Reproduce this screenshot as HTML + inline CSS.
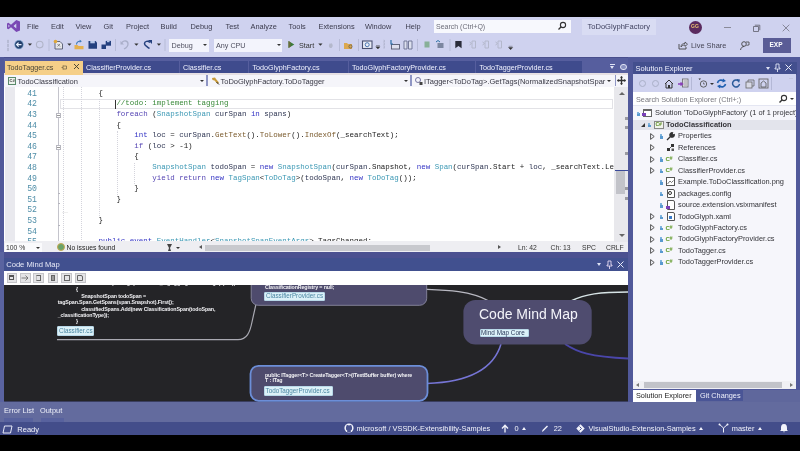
<!DOCTYPE html>
<html><head><meta charset="utf-8">
<style>
*{margin:0;padding:0;box-sizing:border-box}
html,body{width:800px;height:451px;overflow:hidden;background:#000}
body{position:relative;filter:blur(0.4px);font-family:"Liberation Sans",sans-serif;font-size:8px;color:#1e1e1e}
.a{position:absolute}
.t{position:absolute;white-space:nowrap;line-height:1}
.menu{font-size:7.4px;color:#3a3a4c;margin-top:0.4px}
.tri{width:0;height:0;border-left:2.5px solid transparent;border-right:2.5px solid transparent;border-top:2.5px solid #333}
.sep{top:39px;width:1px;height:12px;background:#b4b8d6}
.tab{top:61px;height:11.5px;background:#3f4b8d}
.tabt{top:63.8px;font-size:7.2px;color:#f0f2ff}
.navt{top:78px;font-size:7.5px;color:#383844}
.code{left:58.6px;font-family:"Liberation Mono",monospace;font-size:7.483px;line-height:10.6px;color:#222;white-space:pre}
.ln{left:8px;width:25px;text-align:right;font-family:"Liberation Mono",monospace;font-size:8.2px;line-height:10.6px;color:#4f8ea8}
.k{color:#3333c4}.c{color:#5646b4}.ty{color:#3b98b4}.lv{color:#2e3552}.m{color:#7a5a2c}.cm{color:#3a8a3a}
.stt{top:425.3px;font-size:7.4px;color:#f2f3fb}
.tbt{top:41.5px;font-size:7.2px;color:#505060}
.mmt{font-size:5.3px;color:#f2f2f5;font-weight:bold;letter-spacing:-0.12px}
.chip{background:#dcf1f8;border:0.8px solid #b8d8e8;border-radius:1px}
.chipt{font-size:6.3px;color:#4a86a2}
</style></head><body>
<!-- top black -->
<div class="a" style="left:0;top:0;width:800px;height:17px;background:#000"></div>
<!-- title + toolbar lavender -->
<div class="a" id="chrome" style="left:0;top:17px;width:800px;height:40px;background:#cfd2ef"></div>

<!-- CHROME CONTENT -->
<svg class="a" style="left:7px;top:20px" width="13" height="12" viewBox="0 0 13 12"><path d="M9.3 0 L13 1.5 V10.5 L9.3 12 L4 7.3 L1.4 9.2 L0 8.5 V3.5 L1.4 2.8 L4 4.7 Z M9.3 3.4 L6.5 6 L9.3 8.6 Z M1.4 4.6 V7.4 L2.8 6 Z" fill="#7a48b4" fill-rule="evenodd"/></svg>
<div class="t menu" style="left:27px;top:23px">File</div>
<div class="t menu" style="left:51px;top:23px">Edit</div>
<div class="t menu" style="left:75.5px;top:23px">View</div>
<div class="t menu" style="left:103.5px;top:23px">Git</div>
<div class="t menu" style="left:126px;top:23px">Project</div>
<div class="t menu" style="left:160.5px;top:23px">Build</div>
<div class="t menu" style="left:190.5px;top:23px">Debug</div>
<div class="t menu" style="left:225.5px;top:23px">Test</div>
<div class="t menu" style="left:250.5px;top:23px">Analyze</div>
<div class="t menu" style="left:288.5px;top:23px">Tools</div>
<div class="t menu" style="left:318.5px;top:23px">Extensions</div>
<div class="t menu" style="left:365px;top:23px">Window</div>
<div class="t menu" style="left:405.5px;top:23px">Help</div>
<!-- search box -->
<div class="a" style="left:434px;top:20px;width:137px;height:13px;background:#f7f8fd"></div>
<div class="t" style="left:436px;top:23px;font-size:7px;color:#6d6d7a">Search (Ctrl+Q)</div>
<svg class="a" style="left:557px;top:21px" width="10" height="10" viewBox="0 0 10 10"><circle cx="6" cy="4" r="2.6" fill="none" stroke="#333" stroke-width="1.1"/><path d="M4.2 5.8 L1.5 8.5" stroke="#333" stroke-width="1.3"/></svg>
<div class="a" style="left:582px;top:19px;width:74px;height:16px;background:#d9dcf3"></div>
<div class="t" style="left:587.5px;top:23px;font-size:7.55px;color:#404260">ToDoGlyphFactory</div>
<!-- avatar -->
<div class="a" style="left:689px;top:20.5px;width:13px;height:13px;border-radius:50%;background:#5a2a5e"></div>
<div class="t" style="left:691px;top:24px;font-size:5px;color:#e8c070;font-weight:bold">GG</div>
<!-- window controls -->
<div class="a" style="left:724px;top:27px;width:7px;height:1px;background:#8a8a98"></div>
<svg class="a" style="left:752px;top:23.5px" width="9" height="9" viewBox="0 0 9 9"><path d="M1.5 2.5 h5 v5 h-5z M2.8 1.2 h5 v5" fill="none" stroke="#6a6a78" stroke-width="0.9"/></svg>
<svg class="a" style="left:781.5px;top:24px" width="8" height="8" viewBox="0 0 8 8"><path d="M0.7 0.7 L7.3 7.3 M7.3 0.7 L0.7 7.3" stroke="#757584" stroke-width="0.8"/></svg>
<!-- toolbar -->
<svg class="a" style="left:0;top:17px" width="560" height="40" viewBox="0 17 560 40">
<path d="M7 40 l2 1.5 l-2 1.5 M9 40 l-2 1.5 l2 1.5 M7 44 l2 1.5 l-2 1.5 M9 44 l-2 1.5 l2 1.5 M7 48 l2 1.5 l-2 1.5 M9 48 l-2 1.5 l2 1.5" stroke="#a8acc4" stroke-width="0.6" fill="none"/>
<circle cx="19" cy="44.6" r="4.3" fill="#25406e" stroke="#7fb0d8" stroke-width="0.6"/>
<path d="M21.5 44.6 H16.8 M18.6 42.6 L16.6 44.6 L18.6 46.6" stroke="#e8f2ff" stroke-width="1.2" fill="none"/>
<path d="M27.8 43.6 h4.2 l-2.1 2.2z" fill="#333"/>
<circle cx="39.7" cy="44.6" r="3.3" fill="none" stroke="#b0b4c8" stroke-width="1.1"/>
<rect x="48.5" y="39" width="1" height="12" fill="#b8bcd8"/>
<path d="M55 41.5 h5 l2.5 2.5 v5 h-7.5z" fill="#e6e6ea" stroke="#555a70" stroke-width="0.9"/>
<path d="M57.5 44 l2.5 2.5 M60 44 l-2.5 2.5" stroke="#666" stroke-width="0.7"/>
<circle cx="55.5" cy="41.5" r="1.8" fill="#e0a83a"/>
<path d="M67.3 43.6 h4.2 l-2.1 2.2z" fill="#333"/>
<path d="M74.5 45 h3 l1 1 h5 v3.3 h-9z" fill="#e4b04e"/>
<path d="M76.5 44.5 c0-2.5 2-3.5 4-3.2" fill="none" stroke="#3a78b8" stroke-width="1.1"/>
<path d="M79.7 39.8 l2.2 1.5 l-2.2 1.5z" fill="#3a78b8"/>
<path d="M88.5 41 h7 l1.5 1.5 v6.3 h-8.5z" fill="#24407e"/>
<rect x="90.3" y="41" width="4.5" height="2.3" fill="#b8c8e8"/>
<path d="M101.5 44.5 h4.5 v4.5 h-4.5z" fill="#24407e"/>
<path d="M105.7 40.9 h5.3 v4.8 h-5.3z" fill="#24407e"/>
<rect x="107" y="40.9" width="2.5" height="1.3" fill="#b8c8e8"/>
<rect x="115" y="39" width="1" height="12" fill="#b8bcd8"/>
<path d="M122 42.5 c2-2.5 6-2 6 1.5 c0 2.5 -2 4 -4 5" fill="none" stroke="#a9aec8" stroke-width="1.3"/>
<path d="M120.5 41 v3.5 h3.5z" fill="#a9aec8"/>
<path d="M134.3 43.6 h4.2 l-2.1 2.2z" fill="#333"/>
<path d="M149.5 48.5 c-2-1.5 -5-3 -5-5 c0-2.3 3.5-3 5.5-1" fill="none" stroke="#24407e" stroke-width="1.5"/>
<path d="M148 40 h4 v4 z" fill="#24407e"/>
<path d="M156.8 43.6 h4.2 l-2.1 2.2z" fill="#333"/>
<rect x="164.5" y="39" width="1" height="12" fill="#b8bcd8"/>
<path d="M288.5 41 l5.8 3.5 l-5.8 3.5z" fill="#3a7a3a"/>
<path d="M288.5 41 v7 l2 -1.2 v-4.6z" fill="#6b6b3a"/>
<path d="M318.3 43.6 h4.2 l-2.1 2.2z" fill="#333"/>
<path d="M330 48 c-1.5-1 -1.5-3 0-5 c0.5 1.2 1.5 1 1.5 0 c1.5 1.5 1.8 3.5 0 5z" fill="#b4b8cc"/>
<rect x="339" y="39" width="1" height="12" fill="#b8bcd8"/>
<path d="M344 43 h3 l1 1 h4 v5 h-8z" fill="#dca850"/>
<circle cx="350.5" cy="46.5" r="1.6" fill="none" stroke="#555" stroke-width="0.7"/>
<rect x="358" y="39" width="1" height="12" fill="#b8bcd8"/>
<rect x="362.5" y="41" width="9.5" height="7.5" fill="#e8ebf5" stroke="#4a5070" stroke-width="1.1"/>
<circle cx="367.2" cy="44.7" r="2" fill="none" stroke="#3a6aa8" stroke-width="0.9"/>
<path d="M375.8 46.8 h4.2 l-2.1 2.2z M376 45.5 h3.8" fill="#333" stroke="#333" stroke-width="0.4"/>
<path d="M383.5 40 l1.5 1.2 l-1.5 1.2 M383.5 43 l1.5 1.2 l-1.5 1.2 M383.5 46 l1.5 1.2 l-1.5 1.2 M385 40 l-1.5 1.2 l1.5 1.2 M385 43 l-1.5 1.2 l1.5 1.2 M385 46 l-1.5 1.2 l1.5 1.2" stroke="#a8acc4" stroke-width="0.5" fill="none"/>
<rect x="391.5" y="44.5" width="8" height="4.5" fill="#dde0ee" stroke="#555a70" stroke-width="0.9"/>
<path d="M391 40 v4 h2" fill="none" stroke="#2a70a8" stroke-width="1.2"/>
<path d="M404 41 h3 v8 h-3z M408.5 41 h3.5 v8 h-3.5z" fill="#dde0ee" stroke="#6a7090" stroke-width="0.9"/>
<rect x="417" y="39" width="1" height="12" fill="#b8bcd8"/>
<rect x="424.5" y="41.5" width="5" height="6" fill="#88b098"/>
<path d="M436 42 l2 -1.5 l2 1.5" fill="none" stroke="#2a70a8" stroke-width="1"/>
<rect x="437.5" y="43" width="6" height="5" fill="#7c86a0"/>
<rect x="449.5" y="39" width="1" height="12" fill="#b8bcd8"/>
<path d="M455.3 41 h6.3 v7.2 l-3.15 -2.2 l-3.15 2.2z" fill="#2a2c3a"/>
<path d="M469.5 42 l2 1.5 l-2 1.5 M472 41 h3.5 v7 h-3.5z" fill="none" stroke="#b4b8cc" stroke-width="1"/>
<path d="M482.5 42 l2 1.5 l-2 1.5 M485 41 h3.5 v7 h-3.5z" fill="none" stroke="#b4b8cc" stroke-width="1"/>
<path d="M495.5 42 l2 1.5 l-2 1.5 M498 41 h3.5 v7 h-3.5z" fill="none" stroke="#b4b8cc" stroke-width="1"/>
<path d="M508.5 47.5 h4.2 l-2.1 2.2z M508.7 46.3 h3.8" fill="#333" stroke="#333" stroke-width="0.4"/>
</svg>
<div class="a" style="left:169px;top:38.5px;width:40px;height:13px;background:#f3f4fc"></div>
<div class="t tbt" style="left:171.5px">Debug</div>
<div class="a tri" style="left:203px;top:44px"></div>
<div class="a" style="left:213.5px;top:38.5px;width:68.5px;height:13px;background:#f3f4fc"></div>
<div class="t tbt" style="left:216px">Any CPU</div>
<div class="a tri" style="left:276.5px;top:44px"></div>
<div class="t tbt" style="left:299px;color:#333">Start</div>
<!-- Live share -->
<svg class="a" style="left:678px;top:41px" width="10" height="9" viewBox="0 0 10 9"><path d="M1 3 V8 H8 V6" fill="none" stroke="#444" stroke-width="0.9"/><path d="M3 6 C3 3 5 2.5 7 2.5 V1 L9.5 3.2 L7 5.4 V4 C5.5 4 4 4.3 3 6Z" fill="none" stroke="#444" stroke-width="0.8"/></svg>
<div class="t" style="left:691px;top:42.2px;font-size:7.4px;color:#454555">Live Share</div>
<svg class="a" style="left:739px;top:40px" width="11" height="11" viewBox="0 0 11 11"><circle cx="5" cy="4" r="2.3" fill="none" stroke="#444" stroke-width="0.9"/><path d="M1.5 10 C2 7.5 3.5 6.5 5 6.5" fill="none" stroke="#444" stroke-width="0.9"/><path d="M7 2 H10 V5 H8.5 L7.5 6" fill="none" stroke="#444" stroke-width="0.8"/></svg>
<div class="a" style="left:763px;top:38px;width:28px;height:15px;background:#5a5c96"></div>
<div class="t" style="left:769.5px;top:42px;font-size:6.5px;color:#fff;font-weight:bold">EXP</div>
<!-- main dark blue frame -->
<div class="a" style="left:0;top:57px;width:800px;height:345px;background:#51599a"></div>
<div class="a" style="left:0;top:252px;width:4.5px;height:150px;background:#5a63a0"></div>
<!-- tab well -->
<div class="a" style="left:4px;top:57px;width:624px;height:17px;background:#565e9e"></div>
<!-- nav bar -->
<div class="a" style="left:4px;top:74px;width:624px;height:13px;background:#f5f5fa"></div>

<!-- TABS -->
<div class="a" style="left:4px;top:57px;width:624px;height:1px;background:#484e8c"></div>
<div class="a tab" style="left:83px;width:96px"></div>
<div class="a tab" style="left:180px;width:68px"></div>
<div class="a tab" style="left:249px;width:99px"></div>
<div class="a tab" style="left:349px;width:126px"></div>
<div class="a tab" style="left:476px;width:106px"></div>
<div class="a" style="left:4px;top:72.5px;width:624px;height:2px;background:#e6e0e4"></div>
<div class="a" style="left:4.5px;top:61px;width:78px;height:13.5px;background:#f5cf88"></div>
<div class="t tabt" style="left:7px;color:#4a4636">TodoTagger.cs</div>
<svg class="a" style="left:61px;top:63.5px" width="7" height="7" viewBox="0 0 7 7"><path d="M0.5 3.5 H2 M2 1.5 V5.5 M2 2 H5.5 V5 H2" fill="none" stroke="#7a6a48" stroke-width="0.8"/></svg>
<svg class="a" style="left:72.5px;top:63px" width="7" height="7" viewBox="0 0 7 7"><path d="M1 1 L6 6 M6 1 L1 6" stroke="#3b3a2a" stroke-width="0.9"/></svg>
<div class="t tabt" style="left:86px">ClassifierProvider.cs</div>
<div class="t tabt" style="left:183px">Classifier.cs</div>
<div class="t tabt" style="left:252.5px">TodoGlyphFactory.cs</div>
<div class="t tabt" style="left:352px">TodoGlyphFactoryProvider.cs</div>
<div class="t tabt" style="left:479.5px">TodoTaggerProvider.cs</div>
<div class="a" style="left:609.5px;top:64px;width:5px;height:1px;background:#dfe3f5"></div>
<div class="a" style="left:609.5px;top:66px;width:0;height:0;border-left:2.5px solid transparent;border-right:2.5px solid transparent;border-top:3px solid #dfe3f5"></div>
<div class="a" style="left:620px;top:63.5px;width:6.5px;height:6.5px;border-radius:50%;border:1.6px solid #dfe3f5;background:#8890c0"></div>
<!-- NAV BAR -->
<div class="a" style="left:206px;top:75px;width:1.5px;height:11px;background:#8f96c4"></div>
<div class="a" style="left:410px;top:75px;width:1.5px;height:11px;background:#8f96c4"></div>
<div class="a" style="left:614.5px;top:75px;width:1.5px;height:11px;background:#8f96c4"></div>
<div class="a" style="left:8px;top:76.5px;width:8px;height:8px;border:1px solid #5a8a6a;background:#eef3ee"></div>
<div class="t" style="left:9.5px;top:78.5px;font-size:4px;color:#333;font-weight:bold">C#</div>
<div class="t navt" style="left:17.5px">TodoClassification</div>
<div class="a tri" style="left:199.5px;top:79.5px"></div>
<svg class="a" style="left:211px;top:76px" width="9" height="9" viewBox="0 0 9 9"><path d="M1 2 L4 1.5 L5 3 L8 6.5 L6.5 8 L3.5 4.5 L1.5 4 Z" fill="#c89a3a"/><path d="M5.5 6 L8 8.5" stroke="#333" stroke-width="1"/></svg>
<div class="t navt" style="left:220.5px">ToDoGlyphFactory.ToDoTagger</div>
<div class="a tri" style="left:403.5px;top:79.5px"></div>
<svg class="a" style="left:414px;top:75.5px" width="10" height="10" viewBox="0 0 10 10"><circle cx="4" cy="4" r="2.5" fill="none" stroke="#6a6a9a" stroke-width="0.9"/><rect x="5.5" y="6" width="3" height="3" fill="#444"/></svg>
<div class="t navt" style="left:424px">ITagger&lt;ToDoTag&gt;.GetTags(NormalizedSnapshotSpar</div>
<div class="a tri" style="left:606.5px;top:79.5px"></div>
<svg class="a" style="left:617px;top:76px" width="9" height="9" viewBox="0 0 9 9"><path d="M4.5 0.5 V8.5 M0.5 4.5 H8.5" stroke="#333" stroke-width="1.3"/><path d="M4.5 0 L3 1.8 H6 Z M4.5 9 L3 7.2 H6Z M0 4.5 L1.8 3 V6Z M9 4.5 L7.2 3 V6Z" fill="#333"/></svg>
<!-- code area -->
<div class="a" style="left:4px;top:87px;width:624px;height:155px;background:#fff"></div>
<!-- CODE -->
<div class="a" style="left:4px;top:87px;width:610px;height:155px;overflow:hidden">
<div class="a" style="left:0.5px;top:0;width:10.5px;height:155px;background:#e9e9ee"></div>
<div class="a" style="left:56px;top:11.5px;width:553px;height:10px;border:1px solid #e2e2e6"></div>
<div class="a" style="left:58.6px;top:0.0px;width:0;height:155.0px;border-left:1px dotted #d4d4dc"></div>
<div class="a" style="left:76.6px;top:0.0px;width:0;height:155.0px;border-left:1px dotted #d4d4dc"></div>
<div class="a" style="left:94.5px;top:12.3px;width:0;height:116.6px;border-left:1px dotted #d4d4dc"></div>
<div class="a" style="left:112.5px;top:44.1px;width:0;height:63.6px;border-left:1px dotted #d4d4dc"></div>
<div class="a" style="left:130.4px;top:75.9px;width:0;height:21.2px;border-left:1px dotted #d4d4dc"></div>
<div class="a" style="left:53.5px;top:0;width:1px;height:155px;background:#c4c4cc"></div>
<div class="a" style="left:51.5px;top:25.9px;width:5px;height:5px;border:0.8px solid #b8b8c0;background:#fff"></div>
<div class="a" style="left:52.5px;top:27.9px;width:3px;height:0.8px;background:#999"></div>
<div class="a" style="left:51.5px;top:57.7px;width:5px;height:5px;border:0.8px solid #b8b8c0;background:#fff"></div>
<div class="a" style="left:52.5px;top:59.7px;width:3px;height:0.8px;background:#999"></div>
<div class="a" style="left:54px;top:105.7px;width:2px;height:1px;background:#b5b5bd"></div>
<div class="a" style="left:54px;top:116.3px;width:2px;height:1px;background:#b5b5bd"></div>
<div class="a" style="left:54px;top:137.5px;width:2px;height:1px;background:#b5b5bd"></div>
<div class="t" style="left:58px;top:122.3px;font-size:6px;color:#999">&#183;&#183;&#183;</div>
<div class="t ln" style="top:1.7px">41</div>
<div class="t code" style="top:0.8px">        {</div>
<div class="t ln" style="top:12.3px">42</div>
<div class="t code" style="top:11.4px">            <span class="cm">//todo: implement tagging</span></div>
<div class="t ln" style="top:22.9px">43</div>
<div class="t code" style="top:22.0px">            <span class="c">foreach</span> (<span class="ty">SnapshotSpan</span> <span class="lv">curSpan</span> <span class="k">in</span> <span class="lv">spans</span>)</div>
<div class="t ln" style="top:33.5px">44</div>
<div class="t code" style="top:32.6px">            {</div>
<div class="t ln" style="top:44.1px">45</div>
<div class="t code" style="top:43.2px">                <span class="k">int</span> <span class="lv">loc</span> = <span class="lv">curSpan</span>.<span class="m">GetText</span>().<span class="m">ToLower</span>().<span class="m">IndexOf</span>(_searchText);</div>
<div class="t ln" style="top:54.7px">46</div>
<div class="t code" style="top:53.8px">                <span class="c">if</span> (<span class="lv">loc</span> &gt; -1)</div>
<div class="t ln" style="top:65.3px">47</div>
<div class="t code" style="top:64.4px">                {</div>
<div class="t ln" style="top:75.9px">48</div>
<div class="t code" style="top:75.0px">                    <span class="ty">SnapshotSpan</span> <span class="lv">todoSpan</span> = <span class="k">new</span> <span class="ty">SnapshotSpan</span>(<span class="lv">curSpan</span>.Snapshot, <span class="k">new</span> <span class="ty">Span</span>(<span class="lv">curSpan</span>.Start + <span class="lv">loc</span>, _searchText.Length));</div>
<div class="t ln" style="top:86.5px">49</div>
<div class="t code" style="top:85.6px">                    <span class="c">yield</span> <span class="c">return</span> <span class="k">new</span> <span class="ty">TagSpan</span>&lt;<span class="ty">ToDoTag</span>&gt;(<span class="lv">todoSpan</span>, <span class="k">new</span> <span class="ty">ToDoTag</span>());</div>
<div class="t ln" style="top:97.1px">50</div>
<div class="t code" style="top:96.2px">                }</div>
<div class="t ln" style="top:107.7px">51</div>
<div class="t code" style="top:106.8px">            }</div>
<div class="t ln" style="top:118.3px">52</div>
<div class="t code" style="top:117.4px"></div>
<div class="t ln" style="top:128.9px">53</div>
<div class="t code" style="top:128.0px">        }</div>
<div class="t ln" style="top:139.5px">54</div>
<div class="t code" style="top:138.6px"></div>
<div class="t ln" style="top:150.1px">55</div>
<div class="t code" style="top:149.2px">        <span class="k">public</span> <span class="k">event</span> <span class="ty">EventHandler</span>&lt;<span class="ty">SnapshotSpanEventArgs</span>&gt; TagsChanged;</div>
<div class="a" style="left:110.7px;top:12.5px;width:1.4px;height:9px;background:#333"></div>
</div>
<!-- editor status row -->
<div class="a" style="left:4px;top:241.3px;width:624px;height:10.7px;background:#eeeef2"></div>

<!-- EDITOR STATUS ROW -->
<div class="a" style="left:5px;top:243px;width:37px;height:9px;background:#fafafc"></div>
<div class="t" style="left:6px;top:244.5px;font-size:6.8px;color:#333">100 %</div>
<div class="a tri" style="left:36px;top:246.5px"></div>
<div class="a" style="left:56.5px;top:243px;width:8px;height:8px;border-radius:50%;background:#6aa36a;border:1px solid #c8a850"></div>
<div class="t" style="left:66.5px;top:244.5px;font-size:6.8px;color:#222">No issues found</div>
<svg class="a" style="left:165px;top:243px" width="9" height="9" viewBox="0 0 9 9"><path d="M2 1 L7 1 L5 5 L6 8 L3 8 L4 5 Z" fill="#444"/></svg>
<div class="a tri" style="left:176px;top:246.5px"></div>
<div class="a" style="left:199px;top:245px;width:0;height:0;border-right:3px solid #555;border-top:2.5px solid transparent;border-bottom:2.5px solid transparent"></div>
<div class="a" style="left:205px;top:244.5px;width:225px;height:6px;background:#c8c9ce"></div>
<div class="a" style="left:497.5px;top:245px;width:0;height:0;border-left:3px solid #555;border-top:2.5px solid transparent;border-bottom:2.5px solid transparent"></div>
<div class="t" style="left:518px;top:244.5px;font-size:6.8px;color:#333">Ln: 42</div>
<div class="t" style="left:550.5px;top:244.5px;font-size:6.8px;color:#333">Ch: 13</div>
<div class="t" style="left:582px;top:244.5px;font-size:6.8px;color:#333">SPC</div>
<div class="t" style="left:606px;top:244.5px;font-size:6.8px;color:#333">CRLF</div>
<!-- V SCROLLBAR -->
<div class="a" style="left:614px;top:87px;width:14px;height:155px;background:#e8e8ec"></div>
<div class="a" style="left:618.5px;top:91.5px;width:0;height:0;border-left:3px solid transparent;border-right:3px solid transparent;border-bottom:3px solid #666"></div>
<div class="a" style="left:618.5px;top:233.5px;width:0;height:0;border-left:3px solid transparent;border-right:3px solid transparent;border-top:3px solid #666"></div>
<div class="a" style="left:616px;top:171px;width:8.5px;height:23px;background:#c2c3c9"></div>
<div class="a" style="left:614.5px;top:169.5px;width:13.5px;height:1.2px;background:#3a4a9a"></div>
<div class="a" style="left:625px;top:116.5px;width:3px;height:3px;background:#9a9aa0"></div>
<div class="a" style="left:625px;top:125.5px;width:3px;height:3px;background:#9a9aa0"></div>
<div class="a" style="left:625px;top:151.5px;width:3px;height:3px;background:#9a9aa0"></div>
<div class="a" style="left:625px;top:186.5px;width:3px;height:3px;background:#9a9aa0"></div>
<div class="a" style="left:625px;top:196.5px;width:3px;height:3px;background:#9a9aa0"></div>
<!-- mind map title -->
<div class="a" style="left:4px;top:252px;width:624px;height:5.5px;background:#4b5090"></div>
<div class="a" style="left:4px;top:257.5px;width:624px;height:13px;background:#41508f"></div>
<!-- mind map toolbar -->
<div class="a" style="left:4px;top:270.5px;width:624px;height:14.5px;background:#fff"></div>
<!-- canvas -->
<div class="a" style="left:4px;top:285px;width:624px;height:116px;background:#1f1f22"></div>
<!-- MM START -->
<div class="t" style="left:6.2px;top:260.5px;font-size:7.6px;color:#e8eaf8">Code Mind Map</div>
<div class="a" style="left:597px;top:263px;width:0;height:0;border-left:2.5px solid transparent;border-right:2.5px solid transparent;border-top:3px solid #dfe3f5"></div>
<svg class="a" style="left:606px;top:259.5px" width="7" height="9" viewBox="0 0 7 9"><path d="M2 1 H5 V5 H6 V6 H1 V5 H2 Z M3.5 6 V9" fill="none" stroke="#e4d8f0" stroke-width="0.9"/></svg>
<svg class="a" style="left:617px;top:261px" width="7" height="7" viewBox="0 0 7 7"><path d="M0.5 0.5 L6.5 6.5 M6.5 0.5 L0.5 6.5" stroke="#e8ebf8" stroke-width="1"/></svg>
<div class="a" style="left:7.0px;top:272.5px;width:10.0px;height:10.5px;background:#e4e4e6;border:1px solid #c4c4c8"></div>
<div class="a" style="left:19.5px;top:272.5px;width:11.0px;height:10.5px;background:#e4e4e6;border:1px solid #c4c4c8"></div>
<div class="a" style="left:33.0px;top:272.5px;width:10.7px;height:10.5px;background:#e4e4e6;border:1px solid #c4c4c8"></div>
<div class="a" style="left:47.5px;top:272.5px;width:10.5px;height:10.5px;background:#e4e4e6;border:1px solid #c4c4c8"></div>
<div class="a" style="left:61.0px;top:272.5px;width:11.0px;height:10.5px;background:#e4e4e6;border:1px solid #c4c4c8"></div>
<div class="a" style="left:74.5px;top:272.5px;width:11.0px;height:10.5px;background:#e4e4e6;border:1px solid #c4c4c8"></div>
<div class="a" style="left:9px;top:275px;width:5px;height:5px;border:1px solid #555;border-top-width:2px"></div>
<svg class="a" style="left:21px;top:273.5px" width="8" height="8" viewBox="0 0 8 8"><path d="M0.5 4 H7 M4.5 1.5 L7 4 L4.5 6.5" fill="none" stroke="#666" stroke-width="0.8"/></svg>
<div class="a" style="left:36px;top:274.5px;width:5px;height:6.5px;border:1px solid #666;border-left-color:#bbb"></div>
<div class="a" style="left:50.5px;top:274.5px;width:4.5px;height:6.5px;border:1px solid #666;background:#999"></div>
<div class="a" style="left:63.5px;top:274.5px;width:6px;height:6px;border:1px solid #666"></div>
<div class="a" style="left:77px;top:274.5px;width:6px;height:6.5px;border:1px solid #666;border-radius:0 2px 0 0"></div>
<svg class="a" style="left:4px;top:285px" width="624" height="116.5" viewBox="4 285 624 116.5">
<rect x="4" y="285" width="624" height="116.5" fill="#242427"/>
<path d="M57 339.6 H238 C247 339.6 250 332 252 322 L256 304" fill="none" stroke="#a9a9b2" stroke-width="1.2"/>
<path d="M425 289.3 C445 290 470 290.5 489 301" fill="none" stroke="#b9b9c2" stroke-width="1.2"/>
<path d="M571 301 C585 294 600 292 628 292" fill="none" stroke="#d7e4e6" stroke-width="1.5"/>
<path d="M501 344 C494 368 470 382 427 383.5" fill="none" stroke="#7675d6" stroke-width="1.5"/>
<path d="M565 344 C577 352 590 357 628 358.5" fill="none" stroke="#4a46aa" stroke-width="1.8"/>
<rect x="251.2" y="270" width="175.5" height="35.3" rx="7" fill="#4e4b6d" stroke="#8a89a0" stroke-width="0.9"/>
<rect x="463.4" y="300" width="128.3" height="44.4" rx="12" fill="#4f4c6f"/>
<rect x="250.5" y="365.8" width="177" height="35" rx="8" fill="#4e4b6d" stroke="#6c8ed8" stroke-width="1.8"/>
</svg>
<div class="a" style="left:4px;top:285px;width:624px;height:20px;overflow:hidden"><div class="t mmt" style="left:88px;top:-4.2px">foreach (var tagSpan in this._tagAggregator.GetTags(span))</div></div>
<div class="t mmt" style="left:76px;top:287px">{</div>
<div class="t mmt" style="left:81.2px;top:293.5px">SnapshotSpan todoSpan =</div>
<div class="t mmt" style="left:57.7px;top:300px">tagSpan.Span.GetSpans(span.Snapshot).First();</div>
<div class="t mmt" style="left:81.2px;top:306.5px">classifiedSpans.Add(new ClassificationSpan(todoSpan,</div>
<div class="t mmt" style="left:57.7px;top:312.7px">_classificationType));</div>
<div class="t mmt" style="left:76px;top:319px">}</div>
<div class="a chip" style="left:57.2px;top:325.7px;width:37px;height:10px"></div>
<div class="t chipt" style="left:59px;top:327.8px">Classifier.cs</div>
<div class="t mmt" style="left:265px;top:285px">ClassificationRegistry = null;</div>
<div class="a chip" style="left:264.4px;top:291.5px;width:60.6px;height:9.2px"></div>
<div class="t chipt" style="left:266px;top:293.2px">ClassifierProvider.cs</div>
<div class="t" style="left:479px;top:307px;font-size:14px;color:#f4f4fa">Code Mind Map</div>
<div class="a chip" style="left:479.9px;top:328.7px;width:48.7px;height:8.5px"></div>
<div class="t chipt" style="left:481px;top:329.8px;color:#2a3a5a;font-size:6.4px">Mind Map Core</div>
<div class="t mmt" style="left:265px;top:373px">public ITagger&lt;T&gt; CreateTagger&lt;T&gt;(ITextBuffer buffer) where</div>
<div class="t mmt" style="left:265px;top:378.2px">T : ITag</div>
<div class="a chip" style="left:263.7px;top:385.5px;width:69.5px;height:10px"></div>
<div class="t chipt" style="left:265.5px;top:387.6px">TodoTaggerProvider.cs</div>
<!-- MM END -->
<!-- solution explorer -->
<div class="a" style="left:633px;top:61.5px;width:164px;height:13px;background:#434f8e"></div>
<div class="a" style="left:633px;top:74px;width:163px;height:18px;background:#cfd2ef"></div>
<div class="a" style="left:633px;top:92px;width:163px;height:13px;background:#fff"></div>
<div class="a" style="left:633px;top:105px;width:163px;height:284px;background:#f6f6fb"></div>
<div class="a" style="left:632.5px;top:389.5px;width:167.5px;height:12.5px;background:#5f679c"></div>
<div class="a" style="left:632.5px;top:389.5px;width:63.5px;height:12px;background:#fff"></div>
<!-- SE START -->
<div class="t" style="left:635.5px;top:64.8px;font-size:7.5px;color:#f0f2ff">Solution Explorer</div>
<div class="a" style="left:765.5px;top:67px;width:0;height:0;border-left:2.5px solid transparent;border-right:2.5px solid transparent;border-top:3px solid #dfe3f5"></div>
<svg class="a" style="left:774px;top:63px" width="7" height="9" viewBox="0 0 7 9"><path d="M2 1 H5 V5 H6 V6 H1 V5 H2 Z M3.5 6 V9" fill="none" stroke="#dfe3f5" stroke-width="0.9"/></svg>
<svg class="a" style="left:785px;top:64px" width="7" height="7" viewBox="0 0 7 7"><path d="M0.5 0.5 L6.5 6.5 M6.5 0.5 L0.5 6.5" stroke="#e8ebf8" stroke-width="1"/></svg>
<div class="a" style="left:638.5px;top:80px;width:7px;height:7px;border-radius:50%;border:1.2px solid #aab0c8"></div>
<div class="a" style="left:652px;top:80px;width:7px;height:7px;border-radius:50%;border:1.2px solid #aab0c8"></div>
<svg class="a" style="left:664px;top:78.5px" width="10" height="10" viewBox="0 0 10 10"><path d="M1 5 L5 1 L9 5 M2 4.5 V9 H8 V4.5" fill="none" stroke="#333" stroke-width="1"/><rect x="4" y="6" width="2" height="3" fill="#333"/></svg>
<svg class="a" style="left:677px;top:78px" width="12" height="11" viewBox="0 0 12 11"><rect x="5.5" y="1" width="5.5" height="8" fill="#e8e8f0" stroke="#666" stroke-width="0.8"/><path d="M6.5 3 H10 M6.5 5 H10 M6.5 7 H10" stroke="#666" stroke-width="0.6"/><path d="M1 6 H5 M3.5 4.5 L5.5 6 L3.5 7.5" stroke="#8a3fb8" stroke-width="1.4" fill="none"/></svg>
<div class="a" style="left:691px;top:77px;width:1px;height:13px;background:#b4b8d6"></div>
<svg class="a" style="left:698px;top:78px" width="10" height="11" viewBox="0 0 10 11"><circle cx="5.5" cy="6" r="3.2" fill="none" stroke="#555" stroke-width="0.9"/><path d="M5.5 4.5 V6 H7" fill="none" stroke="#555" stroke-width="0.7"/><path d="M0.5 0.5 H3 L1.7 2Z" fill="#333"/></svg>
<div class="a tri" style="left:709.5px;top:82.5px"></div>
<svg class="a" style="left:716px;top:78px" width="11" height="11" viewBox="0 0 11 11"><path d="M1.5 5 C2 2 5 1.5 8 3 M9.5 6 C9 9 6 9.5 3 8" fill="none" stroke="#1f5fb0" stroke-width="1.6"/><path d="M7 0.5 L10 3 L6.5 4.5Z M4 10.5 L1 8 L4.5 6.5Z" fill="#1f5fb0"/></svg>
<svg class="a" style="left:730.5px;top:78px" width="10" height="11" viewBox="0 0 10 11"><path d="M7.5 3 A3.5 3.5 0 1 0 8.5 6" fill="none" stroke="#2a5a9a" stroke-width="1.5"/><path d="M5.5 1 L9 1.5 L8 5Z" fill="#2a5a9a"/></svg>
<svg class="a" style="left:744.5px;top:78.5px" width="10" height="10" viewBox="0 0 10 10"><rect x="1" y="3" width="6" height="6" fill="#d8d9e6" stroke="#666" stroke-width="0.8"/><path d="M3 3 V1 H9 V7 H7" fill="none" stroke="#666" stroke-width="0.8"/></svg>
<svg class="a" style="left:757.5px;top:78px" width="11" height="11" viewBox="0 0 11 11"><rect x="1" y="1" width="9" height="9" fill="none" stroke="#666" stroke-width="0.9"/><path d="M3 5 L5.5 3 L8 5 V9 H3Z" fill="none" stroke="#555" stroke-width="0.8"/></svg>
<div class="a" style="left:771px;top:77px;width:1px;height:13px;background:#b4b8d6"></div>
<div class="t" style="left:789px;top:75px;font-size:6px;color:#888">&#183;&#183;</div>
<div class="t" style="left:636px;top:95.5px;font-size:7.3px;color:#77777f">Search Solution Explorer (Ctrl+;)</div>
<svg class="a" style="left:777.5px;top:93.5px" width="10" height="10" viewBox="0 0 10 10"><circle cx="6" cy="4" r="2.6" fill="none" stroke="#333" stroke-width="1.1"/><path d="M4.2 5.8 L1.5 8.5" stroke="#333" stroke-width="1.4"/></svg>
<div class="a tri" style="left:789.5px;top:98px"></div>
<div class="a" style="left:633px;top:104.5px;width:163px;height:1px;background:#e4e6f2"></div>
<div class="a" style="left:633px;top:119.5px;width:163px;height:10.5px;background:#e3e4ec"></div>
<div class="a" style="left:633px;top:105px;width:163px;height:276px;overflow:hidden">
<div class="t" style="left:22.0px;top:4.4px;font-size:7.4px;color:#333338">Solution 'ToDoGlyphFactory' (1 of 1 project)</div>
<div class="a" style="left:3.7px;top:8.4px;width:3px;height:2.6px;background:#5a9ad0"></div><div class="a" style="left:4.1px;top:6.5px;width:2.2px;height:2px;border:0.7px solid #7ab0dc;border-bottom:none;border-radius:1px 1px 0 0"></div>
<div class="a" style="left:10.0px;top:4.2px;width:9px;height:8px;border:1px solid #666;border-top-width:2px;background:#fff"></div><div class="a" style="left:9.0px;top:8.2px;width:4px;height:3px;background:#7a3fb8"></div>
<div class="t" style="left:33.0px;top:15.9px;font-size:7.4px;color:#333338;font-weight:bold">TodoClassification</div>
<div class="a" style="left:7.5px;top:17.7px;width:0;height:0;border-right:4px solid #333;border-top:4px solid transparent"></div>
<div class="a" style="left:14.7px;top:19.9px;width:3px;height:2.6px;background:#5a9ad0"></div><div class="a" style="left:15.1px;top:18.0px;width:2.2px;height:2px;border:0.7px solid #7ab0dc;border-bottom:none;border-radius:1px 1px 0 0"></div>
<div class="a" style="left:20.5px;top:15.7px;width:10px;height:8px;border:1px solid #888;background:#f0f3ec"></div><div class="t" style="left:22.5px;top:17.2px;font-size:5px;color:#5a8a1f;font-weight:bold">C#</div>
<div class="t" style="left:45.0px;top:27.3px;font-size:7.4px;color:#333338">Properties</div>
<svg class="a" style="left:17.0px;top:27.6px" width="5" height="7" viewBox="0 0 5 7"><path d="M0.6 0.6 L4.2 3.5 L0.6 6.4 Z" fill="none" stroke="#444" stroke-width="0.9"/></svg>
<div class="a" style="left:26.7px;top:31.3px;width:3px;height:2.6px;background:#5a9ad0"></div><div class="a" style="left:27.1px;top:29.4px;width:2.2px;height:2px;border:0.7px solid #7ab0dc;border-bottom:none;border-radius:1px 1px 0 0"></div>
<svg class="a" style="left:33.0px;top:26.6px" width="9" height="9" viewBox="0 0 9 9"><path d="M1 8 L5 4 M6.5 0.8 A2.2 2.2 0 1 0 8.2 2.5 L6.8 3 L6 2.2Z" fill="#333" stroke="#333" stroke-width="1.3"/></svg>
<div class="t" style="left:45.0px;top:38.8px;font-size:7.4px;color:#333338">References</div>
<svg class="a" style="left:17.0px;top:39.1px" width="5" height="7" viewBox="0 0 5 7"><path d="M0.6 0.6 L4.2 3.5 L0.6 6.4 Z" fill="none" stroke="#444" stroke-width="0.9"/></svg>
<svg class="a" style="left:33.0px;top:38.1px" width="9" height="9" viewBox="0 0 9 9"><rect x="5" y="1" width="3" height="3" fill="#333"/><rect x="1" y="5" width="3" height="3" fill="#333"/><rect x="5.5" y="5.5" width="2.5" height="2.5" fill="#555"/><path d="M3 6 L6 3" stroke="#333" stroke-width="0.8"/></svg>
<div class="t" style="left:45.0px;top:50.2px;font-size:7.4px;color:#333338">Classifier.cs</div>
<svg class="a" style="left:17.0px;top:50.5px" width="5" height="7" viewBox="0 0 5 7"><path d="M0.6 0.6 L4.2 3.5 L0.6 6.4 Z" fill="none" stroke="#444" stroke-width="0.9"/></svg>
<div class="a" style="left:26.7px;top:54.2px;width:3px;height:2.6px;background:#5a9ad0"></div><div class="a" style="left:27.1px;top:52.3px;width:2.2px;height:2px;border:0.7px solid #7ab0dc;border-bottom:none;border-radius:1px 1px 0 0"></div>
<div class="t" style="left:32.5px;top:50.8px;font-size:6.2px;color:#5f9a28;font-weight:bold;letter-spacing:-0.3px">C<span style="font-size:5px;vertical-align:1px">#</span></div>
<div class="t" style="left:45.0px;top:61.6px;font-size:7.4px;color:#333338">ClassifierProvider.cs</div>
<svg class="a" style="left:17.0px;top:61.9px" width="5" height="7" viewBox="0 0 5 7"><path d="M0.6 0.6 L4.2 3.5 L0.6 6.4 Z" fill="none" stroke="#444" stroke-width="0.9"/></svg>
<div class="a" style="left:26.7px;top:65.6px;width:3px;height:2.6px;background:#5a9ad0"></div><div class="a" style="left:27.1px;top:63.7px;width:2.2px;height:2px;border:0.7px solid #7ab0dc;border-bottom:none;border-radius:1px 1px 0 0"></div>
<div class="t" style="left:32.5px;top:62.2px;font-size:6.2px;color:#5f9a28;font-weight:bold;letter-spacing:-0.3px">C<span style="font-size:5px;vertical-align:1px">#</span></div>
<div class="t" style="left:45.0px;top:73.1px;font-size:7.4px;color:#333338">Example.ToDoClassification.png</div>
<div class="a" style="left:26.7px;top:77.1px;width:3px;height:2.6px;background:#5a9ad0"></div><div class="a" style="left:27.1px;top:75.2px;width:2.2px;height:2px;border:0.7px solid #7ab0dc;border-bottom:none;border-radius:1px 1px 0 0"></div>
<div class="a" style="left:33.0px;top:72.4px;width:9px;height:9px;border:1px solid #555;background:#fff"></div><svg class="a" style="left:33.0px;top:72.4px" width="9" height="9" viewBox="0 0 9 9"><path d="M1.5 7 L4 4 L5.5 5.5 L7.5 3.5" fill="none" stroke="#555" stroke-width="0.8"/></svg>
<div class="t" style="left:45.0px;top:84.5px;font-size:7.4px;color:#333338">packages.config</div>
<div class="a" style="left:26.7px;top:88.5px;width:3px;height:2.6px;background:#5a9ad0"></div><div class="a" style="left:27.1px;top:86.6px;width:2.2px;height:2px;border:0.7px solid #7ab0dc;border-bottom:none;border-radius:1px 1px 0 0"></div>
<div class="a" style="left:33.5px;top:83.5px;width:8px;height:9.5px;border:1px solid #555;background:#fff;border-radius:0 2px 0 0"></div>
<div class="a" style="left:35.0px;top:86.3px;width:4px;height:4px;border-radius:50%;border:1px solid #333"></div>
<div class="t" style="left:45.0px;top:96.0px;font-size:7.4px;color:#333338">source.extension.vsixmanifest</div>
<div class="a" style="left:26.7px;top:100.0px;width:3px;height:2.6px;background:#5a9ad0"></div><div class="a" style="left:27.1px;top:98.1px;width:2.2px;height:2px;border:0.7px solid #7ab0dc;border-bottom:none;border-radius:1px 1px 0 0"></div>
<div class="a" style="left:33.5px;top:95.0px;width:8px;height:9.5px;border:1px solid #555;background:#fff;border-radius:0 2px 0 0"></div>
<div class="a" style="left:32.5px;top:100.8px;width:4px;height:3px;background:#7a3fb8"></div>
<div class="t" style="left:45.0px;top:107.5px;font-size:7.4px;color:#333338">TodoGlyph.xaml</div>
<svg class="a" style="left:17.0px;top:107.8px" width="5" height="7" viewBox="0 0 5 7"><path d="M0.6 0.6 L4.2 3.5 L0.6 6.4 Z" fill="none" stroke="#444" stroke-width="0.9"/></svg>
<div class="a" style="left:26.7px;top:111.5px;width:3px;height:2.6px;background:#5a9ad0"></div><div class="a" style="left:27.1px;top:109.5px;width:2.2px;height:2px;border:0.7px solid #7ab0dc;border-bottom:none;border-radius:1px 1px 0 0"></div>
<div class="a" style="left:33.5px;top:106.5px;width:8px;height:9.5px;border:1px solid #555;background:#fff;border-radius:0 2px 0 0"></div>
<div class="a" style="left:36.0px;top:111.2px;width:3px;height:3px;background:#3a7ac8"></div>
<div class="t" style="left:45.0px;top:118.9px;font-size:7.4px;color:#333338">TodoGlyphFactory.cs</div>
<svg class="a" style="left:17.0px;top:119.2px" width="5" height="7" viewBox="0 0 5 7"><path d="M0.6 0.6 L4.2 3.5 L0.6 6.4 Z" fill="none" stroke="#444" stroke-width="0.9"/></svg>
<div class="a" style="left:26.7px;top:122.9px;width:3px;height:2.6px;background:#5a9ad0"></div><div class="a" style="left:27.1px;top:121.0px;width:2.2px;height:2px;border:0.7px solid #7ab0dc;border-bottom:none;border-radius:1px 1px 0 0"></div>
<div class="t" style="left:32.5px;top:119.5px;font-size:6.2px;color:#5f9a28;font-weight:bold;letter-spacing:-0.3px">C<span style="font-size:5px;vertical-align:1px">#</span></div>
<div class="t" style="left:45.0px;top:130.3px;font-size:7.4px;color:#333338">TodoGlyphFactoryProvider.cs</div>
<svg class="a" style="left:17.0px;top:130.6px" width="5" height="7" viewBox="0 0 5 7"><path d="M0.6 0.6 L4.2 3.5 L0.6 6.4 Z" fill="none" stroke="#444" stroke-width="0.9"/></svg>
<div class="a" style="left:26.7px;top:134.3px;width:3px;height:2.6px;background:#5a9ad0"></div><div class="a" style="left:27.1px;top:132.4px;width:2.2px;height:2px;border:0.7px solid #7ab0dc;border-bottom:none;border-radius:1px 1px 0 0"></div>
<div class="t" style="left:32.5px;top:130.9px;font-size:6.2px;color:#5f9a28;font-weight:bold;letter-spacing:-0.3px">C<span style="font-size:5px;vertical-align:1px">#</span></div>
<div class="t" style="left:45.0px;top:141.8px;font-size:7.4px;color:#333338">TodoTagger.cs</div>
<svg class="a" style="left:17.0px;top:142.1px" width="5" height="7" viewBox="0 0 5 7"><path d="M0.6 0.6 L4.2 3.5 L0.6 6.4 Z" fill="none" stroke="#444" stroke-width="0.9"/></svg>
<div class="a" style="left:26.7px;top:145.8px;width:3px;height:2.6px;background:#5a9ad0"></div><div class="a" style="left:27.1px;top:143.9px;width:2.2px;height:2px;border:0.7px solid #7ab0dc;border-bottom:none;border-radius:1px 1px 0 0"></div>
<div class="t" style="left:32.5px;top:142.4px;font-size:6.2px;color:#5f9a28;font-weight:bold;letter-spacing:-0.3px">C<span style="font-size:5px;vertical-align:1px">#</span></div>
<div class="t" style="left:45.0px;top:153.2px;font-size:7.4px;color:#333338">TodoTaggerProvider.cs</div>
<svg class="a" style="left:17.0px;top:153.6px" width="5" height="7" viewBox="0 0 5 7"><path d="M0.6 0.6 L4.2 3.5 L0.6 6.4 Z" fill="none" stroke="#444" stroke-width="0.9"/></svg>
<div class="a" style="left:26.7px;top:157.2px;width:3px;height:2.6px;background:#5a9ad0"></div><div class="a" style="left:27.1px;top:155.4px;width:2.2px;height:2px;border:0.7px solid #7ab0dc;border-bottom:none;border-radius:1px 1px 0 0"></div>
<div class="t" style="left:32.5px;top:153.9px;font-size:6.2px;color:#5f9a28;font-weight:bold;letter-spacing:-0.3px">C<span style="font-size:5px;vertical-align:1px">#</span></div>
</div>
<div class="a" style="left:633px;top:381px;width:163px;height:8px;background:#f0f0f4"></div>
<div class="a" style="left:636px;top:382.5px;width:0;height:0;border-right:3px solid #777;border-top:2.5px solid transparent;border-bottom:2.5px solid transparent"></div>
<div class="a" style="left:643.5px;top:382px;width:138.5px;height:6px;background:#c2c3c9"></div>
<div class="a" style="left:790px;top:382.5px;width:0;height:0;border-left:3px solid #777;border-top:2.5px solid transparent;border-bottom:2.5px solid transparent"></div>
<div class="a" style="left:696px;top:389.5px;width:46.5px;height:11.5px;background:#4a5596"></div>
<div class="t" style="left:636px;top:392px;font-size:7.3px;color:#222">Solution Explorer</div>
<div class="t" style="left:700px;top:392px;font-size:7.3px;color:#eef0fb">Git Changes</div>
<!-- SE END -->
<!-- bottom band -->
<div class="a" style="left:0;top:401.5px;width:800px;height:21px;background:#636b9e"></div>
<!-- status bar -->
<div class="a" style="left:0;top:422px;width:800px;height:13px;background:#434d8a"></div>
<div class="a" style="left:0;top:435px;width:800px;height:16px;background:#000"></div>
<!-- BOT START -->
<div class="t" style="left:4px;top:406.8px;font-size:7.4px;color:#eef0fa">Error List</div>
<div class="t" style="left:40px;top:406.8px;font-size:7.4px;color:#eef0fa">Output</div>
<div class="a" style="left:4px;top:417.5px;width:29px;height:4.5px;background:#58629e"></div>
<div class="a" style="left:40.5px;top:417.5px;width:23.5px;height:4.5px;background:#58629e"></div>
<svg class="a" style="left:2px;top:424.8px" width="11" height="9" viewBox="0 0 11 9"><path d="M2.5 1 H10 L8.5 8 H1 Z" fill="none" stroke="#e8eaf8" stroke-width="1"/></svg>
<div class="t" style="left:17.3px;top:425.5px;font-size:7.5px;color:#f2f3fb">Ready</div>
<svg class="a" style="left:344px;top:423px" width="10" height="10" viewBox="0 0 10 10"><circle cx="5" cy="5" r="4.6" fill="#f2f3fb"/><path d="M3.2 9.3 V7.5 C2 7.2 1.8 6 2 5 C1.8 4 2.2 3.2 2.6 3 C2.5 2.4 2.7 2 2.8 1.8 C3.3 1.8 3.9 2.2 4.2 2.5 C4.7 2.3 5.3 2.3 5.8 2.5 C6.1 2.2 6.7 1.8 7.2 1.8 C7.3 2 7.5 2.4 7.4 3 C7.8 3.2 8.2 4 8 5 C8.2 6 8 7.2 6.8 7.5 V9.3 Z" fill="#48528f"/></svg>
<div class="t stt" style="left:356.4px">microsoft / VSSDK-Extensibility-Samples</div>
<svg class="a" style="left:501px;top:423.5px" width="8" height="9" viewBox="0 0 8 9"><path d="M4 8.5 V1.5 M1 4.5 L4 1.2 L7 4.5" fill="none" stroke="#f2f3fb" stroke-width="1.3"/></svg>
<div class="t stt" style="left:514.5px">0</div>
<div class="a" style="left:521.5px;top:426.5px;width:0;height:0;border-left:2.5px solid transparent;border-right:2.5px solid transparent;border-bottom:3px solid #f2f3fb"></div>
<svg class="a" style="left:541px;top:423.5px" width="8" height="9" viewBox="0 0 8 9"><path d="M1 8 L1.5 6 L6 1.5 L7 2.5 L2.5 7 Z" fill="#f2f3fb"/></svg>
<div class="t stt" style="left:553.7px">22</div>
<svg class="a" style="left:576px;top:423.5px" width="9" height="9" viewBox="0 0 9 9"><path d="M4.5 0.3 L8.7 4.5 L4.5 8.7 L0.3 4.5 Z" fill="#f2f3fb"/><path d="M3.5 2.5 L5.5 4.5 L3.5 6.5" fill="none" stroke="#48528f" stroke-width="1"/></svg>
<div class="t stt" style="left:588.5px">VisualStudio-Extension-Samples</div>
<div class="a" style="left:698.5px;top:426.5px;width:0;height:0;border-left:2.5px solid transparent;border-right:2.5px solid transparent;border-bottom:3px solid #f2f3fb"></div>
<svg class="a" style="left:718px;top:422.5px" width="11" height="10" viewBox="0 0 11 10"><path d="M1 1 L5.5 5 L10 1 M5.5 5 V9.5" fill="none" stroke="#f2f3fb" stroke-width="1"/><circle cx="1.5" cy="1.5" r="1" fill="#f2f3fb"/><circle cx="9.5" cy="1.5" r="1" fill="#f2f3fb"/></svg>
<div class="t stt" style="left:731.8px">master</div>
<div class="a" style="left:757.5px;top:426.5px;width:0;height:0;border-left:2.5px solid transparent;border-right:2.5px solid transparent;border-bottom:3px solid #f2f3fb"></div>
<svg class="a" style="left:779px;top:422.5px" width="10" height="10" viewBox="0 0 10 10"><path d="M5 1 C7.5 1 8 3 8 5 V7 L9 8 H1 L2 7 V5 C2 3 2.5 1 5 1 Z M4 8.5 H6 L5 9.5Z" fill="#f2f3fb"/></svg>
<!-- BOT END -->
</body></html>
